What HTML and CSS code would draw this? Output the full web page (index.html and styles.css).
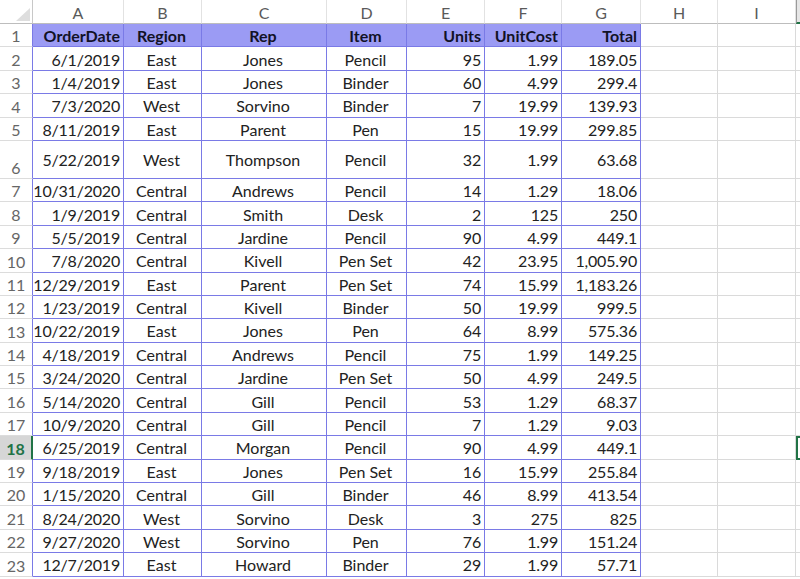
FILE: index.html
```html
<!DOCTYPE html>
<html>
<head>
<meta charset="utf-8">
<link rel="stylesheet" href="styles.css">
</head>
<body>
<div class="sheet">
  <div class="ch corner"><svg class="tri" width="14" height="13" viewBox="0 0 14 13"><polygon points="14,0 14,13 0,13" fill="#dedede"/></svg></div>
  <div class="ch">A</div><div class="ch">B</div><div class="ch">C</div><div class="ch">D</div><div class="ch">E</div><div class="ch">F</div><div class="ch">G</div><div class="ch">H</div><div class="ch">I</div><div class="ch chsel"></div>

  <div class="rh">1</div><div class="t hd r">OrderDate</div><div class="t hd c">Region</div><div class="t hd c">Rep</div><div class="t hd c">Item</div><div class="t hd r">Units</div><div class="t hd r">UnitCost</div><div class="t hd r">Total</div><div class="e"></div><div class="e"></div><div class="e j"></div>

  <div class="rh">2</div><div class="t r">6/1/2019</div><div class="t c">East</div><div class="t c">Jones</div><div class="t c">Pencil</div><div class="t r">95</div><div class="t r">1.99</div><div class="t r">189.05</div><div class="e"></div><div class="e"></div><div class="e j"></div>
  <div class="rh">3</div><div class="t r">1/4/2019</div><div class="t c">East</div><div class="t c">Jones</div><div class="t c">Binder</div><div class="t r">60</div><div class="t r">4.99</div><div class="t r">299.4</div><div class="e"></div><div class="e"></div><div class="e j"></div>
  <div class="rh">4</div><div class="t r">7/3/2020</div><div class="t c">West</div><div class="t c">Sorvino</div><div class="t c">Binder</div><div class="t r">7</div><div class="t r">19.99</div><div class="t r">139.93</div><div class="e"></div><div class="e"></div><div class="e j"></div>
  <div class="rh">5</div><div class="t r">8/11/2019</div><div class="t c">East</div><div class="t c">Parent</div><div class="t c">Pen</div><div class="t r">15</div><div class="t r">19.99</div><div class="t r">299.85</div><div class="e"></div><div class="e"></div><div class="e j"></div>
  <div class="rh">6</div><div class="t r">5/22/2019</div><div class="t c">West</div><div class="t c">Thompson</div><div class="t c">Pencil</div><div class="t r">32</div><div class="t r">1.99</div><div class="t r">63.68</div><div class="e"></div><div class="e"></div><div class="e j"></div>
  <div class="rh">7</div><div class="t r">10/31/2020</div><div class="t c">Central</div><div class="t c">Andrews</div><div class="t c">Pencil</div><div class="t r">14</div><div class="t r">1.29</div><div class="t r">18.06</div><div class="e"></div><div class="e"></div><div class="e j"></div>
  <div class="rh">8</div><div class="t r">1/9/2019</div><div class="t c">Central</div><div class="t c">Smith</div><div class="t c">Desk</div><div class="t r">2</div><div class="t r">125</div><div class="t r">250</div><div class="e"></div><div class="e"></div><div class="e j"></div>
  <div class="rh">9</div><div class="t r">5/5/2019</div><div class="t c">Central</div><div class="t c">Jardine</div><div class="t c">Pencil</div><div class="t r">90</div><div class="t r">4.99</div><div class="t r">449.1</div><div class="e"></div><div class="e"></div><div class="e j"></div>
  <div class="rh">10</div><div class="t r">7/8/2020</div><div class="t c">Central</div><div class="t c">Kivell</div><div class="t c">Pen Set</div><div class="t r">42</div><div class="t r">23.95</div><div class="t r">1,005.90</div><div class="e"></div><div class="e"></div><div class="e j"></div>
  <div class="rh">11</div><div class="t r">12/29/2019</div><div class="t c">East</div><div class="t c">Parent</div><div class="t c">Pen Set</div><div class="t r">74</div><div class="t r">15.99</div><div class="t r">1,183.26</div><div class="e"></div><div class="e"></div><div class="e j"></div>
  <div class="rh">12</div><div class="t r">1/23/2019</div><div class="t c">Central</div><div class="t c">Kivell</div><div class="t c">Binder</div><div class="t r">50</div><div class="t r">19.99</div><div class="t r">999.5</div><div class="e"></div><div class="e"></div><div class="e j"></div>
  <div class="rh">13</div><div class="t r">10/22/2019</div><div class="t c">East</div><div class="t c">Jones</div><div class="t c">Pen</div><div class="t r">64</div><div class="t r">8.99</div><div class="t r">575.36</div><div class="e"></div><div class="e"></div><div class="e j"></div>
  <div class="rh">14</div><div class="t r">4/18/2019</div><div class="t c">Central</div><div class="t c">Andrews</div><div class="t c">Pencil</div><div class="t r">75</div><div class="t r">1.99</div><div class="t r">149.25</div><div class="e"></div><div class="e"></div><div class="e j"></div>
  <div class="rh">15</div><div class="t r">3/24/2020</div><div class="t c">Central</div><div class="t c">Jardine</div><div class="t c">Pen Set</div><div class="t r">50</div><div class="t r">4.99</div><div class="t r">249.5</div><div class="e"></div><div class="e"></div><div class="e j"></div>
  <div class="rh">16</div><div class="t r">5/14/2020</div><div class="t c">Central</div><div class="t c">Gill</div><div class="t c">Pencil</div><div class="t r">53</div><div class="t r">1.29</div><div class="t r">68.37</div><div class="e"></div><div class="e"></div><div class="e j"></div>
  <div class="rh">17</div><div class="t r">10/9/2020</div><div class="t c">Central</div><div class="t c">Gill</div><div class="t c">Pencil</div><div class="t r">7</div><div class="t r">1.29</div><div class="t r">9.03</div><div class="e"></div><div class="e"></div><div class="e j"></div>
  <div class="rh rhsel">18</div><div class="t r">6/25/2019</div><div class="t c">Central</div><div class="t c">Morgan</div><div class="t c">Pencil</div><div class="t r">90</div><div class="t r">4.99</div><div class="t r">449.1</div><div class="e"></div><div class="e"></div><div class="e j jsel"></div>
  <div class="rh">19</div><div class="t r">9/18/2019</div><div class="t c">East</div><div class="t c">Jones</div><div class="t c">Pen Set</div><div class="t r">16</div><div class="t r">15.99</div><div class="t r">255.84</div><div class="e"></div><div class="e"></div><div class="e j"></div>
  <div class="rh">20</div><div class="t r">1/15/2020</div><div class="t c">Central</div><div class="t c">Gill</div><div class="t c">Binder</div><div class="t r">46</div><div class="t r">8.99</div><div class="t r">413.54</div><div class="e"></div><div class="e"></div><div class="e j"></div>
  <div class="rh">21</div><div class="t r">8/24/2020</div><div class="t c">West</div><div class="t c">Sorvino</div><div class="t c">Desk</div><div class="t r">3</div><div class="t r">275</div><div class="t r">825</div><div class="e"></div><div class="e"></div><div class="e j"></div>
  <div class="rh">22</div><div class="t r">9/27/2020</div><div class="t c">West</div><div class="t c">Sorvino</div><div class="t c">Pen</div><div class="t r">76</div><div class="t r">1.99</div><div class="t r">151.24</div><div class="e"></div><div class="e"></div><div class="e j"></div>
  <div class="rh">23</div><div class="t r">12/7/2019</div><div class="t c">East</div><div class="t c">Howard</div><div class="t c">Binder</div><div class="t r">29</div><div class="t r">1.99</div><div class="t r">57.71</div><div class="e"></div><div class="e"></div><div class="e j"></div>
</div>
</body>
</html>
```
FILE: styles.css
```css
html, body {
  margin: 0;
  padding: 0;
  background: #ffffff;
  overflow: hidden;
}
.sheet {
  display: grid;
  grid-template-columns: 33px 91px 78px 125px 80px 78px 77px 79px 77px 78px 10px;
  grid-template-rows: 24px repeat(5, 23.4px) 38px repeat(17, 23.4px);
  font-family: Lato, "Liberation Sans", sans-serif;
  font-size: 16px;
  color: #222;
  width: 806px;
}
.sheet > div {
  box-sizing: border-box;
  display: flex;
  align-items: center;
  white-space: nowrap;
  overflow: hidden;
}
.ch {
  justify-content: center;
  color: #5a5a5a;
  border-right: 1px solid #e2e2e2;
  border-bottom: 1px solid #bdbdbd;
  font-size: 16px;
  padding-top: 1px;
}
.corner {
  position: relative;
  border-right: 1px solid #c8c8c8;
}
.tri {
  position: absolute;
  right: 2px;
  bottom: 2px;
}
.chsel {
  background: #e6e6e6;
  border-left: 1px solid #9a9a9a;
  border-bottom: 2px solid #217346;
}
.rh {
  justify-content: center;
  align-items: flex-end !important;
  color: #666;
  border-right: 1px solid #7a7ae6;
  border-bottom: 1px solid #dcdcdc;
  padding-bottom: 1px;
}
.rhsel {
  background: #d6d6d6;
  color: #217346;
  font-weight: 700;
  border-right: 2px solid #217346;
}
.t {
  border-right: 1px solid #7a7ae6;
  border-bottom: 1px solid #7a7ae6;
  padding: 1px 3px 0 1px;
}
.r {
  justify-content: flex-end;
  letter-spacing: -0.2px;
}
.hd {
  background: #9b9bf4;
  font-weight: 700;
  color: #121226;
  letter-spacing: 0;
}
.c { justify-content: center; }
.e {
  border-right: 1px solid #dadada;
  border-bottom: 1px solid #dadada;
}
.j {
  border-right: none;
}
.jsel {
  border: 2px solid #217346;
  border-right: none;
}
```
